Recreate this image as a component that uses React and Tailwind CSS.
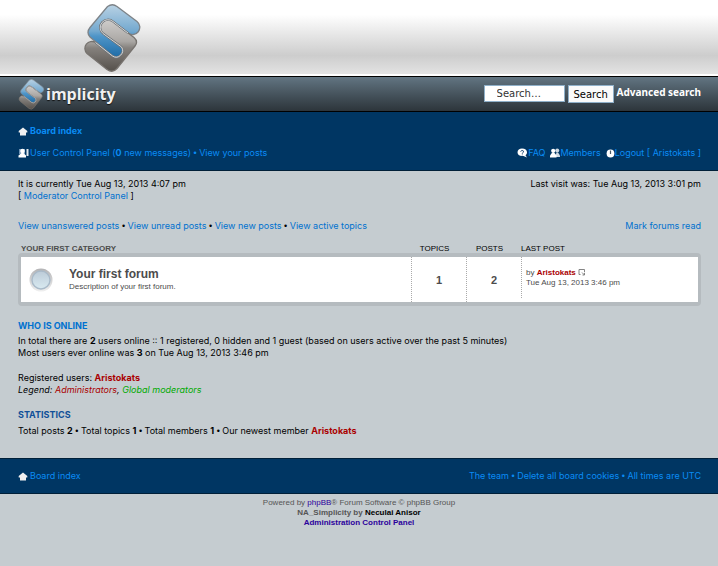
const navLink = "text-[#0a8cf5] hover:underline";
const link = "text-[#0071cf] hover:underline";

function Dot() {
  return <span className="font-['Liberation_Sans',Arial,sans-serif]"> • </span>;
}

function Logo({ id, className }) {
  return (
    <svg viewBox="0 0 57 69" className={className} aria-hidden="true">
      <defs>
        <linearGradient id={`${id}-blue`} x1="0" y1="0" x2="0" y2="1">
          <stop offset="0" stopColor="#b9d2e4" />
          <stop offset="0.5" stopColor="#74a9cf" />
          <stop offset="0.6" stopColor="#4f95c8" />
          <stop offset="1" stopColor="#1f6ca6" />
        </linearGradient>
        <linearGradient id={`${id}-gray`} x1="0" y1="0" x2="0" y2="1">
          <stop offset="0" stopColor="#cfcdcb" />
          <stop offset="0.42" stopColor="#aaa7a4" />
          <stop offset="0.55" stopColor="#85817d" />
          <stop offset="1" stopColor="#55504b" />
        </linearGradient>
      </defs>
      <path
        d="M23.500 2.500Q28.500 -1 33 2.500L53 17.500A7.300 7.300 0 0 1 44 29L29 17.500A7.800 7.800 0 0 0 19 29.500L37.500 43A6.500 6.500 0 0 1 28.500 52L6 33Q2 28.500 6 23.500Z"
        fill={`url(#${id}-blue)`}
        stroke="#7d8388"
        strokeWidth="1.300"
      />
      <path
        d="M29 17.500L50 33.500Q54.500 37.500 51 42L33 64.500Q28.500 69.500 23 65.500L3 49.500A7 7 0 0 1 11.500 38.500L28.500 52A6.500 6.500 0 0 0 37.500 43L19 29.500A7.800 7.800 0 0 1 29 17.500Z"
        fill={`url(#${id}-gray)`}
        stroke="#77736f"
        strokeWidth="1.300"
      />
      <path d="M44 29L29 17.500A7.800 7.800 0 0 0 19 29.500L37.500 43A6.500 6.500 0 0 1 28.500 52L11.500 38.500" fill="none" stroke="#707579" strokeWidth="2.200" />
      <path d="M44 29L29 17.500A7.800 7.800 0 0 0 19 29.500L37.500 43A6.500 6.500 0 0 1 28.500 52L11.500 38.500" fill="none" stroke="#d3d6d8" strokeWidth="1" />
    </svg>
  );
}

function HomeIcon() {
  return (
    <svg viewBox="0 0 10 9" className="h-[9px] w-[10px] shrink-0" aria-hidden="true">
      <path d="M5 0.500L9.300 4V5.500H8V8.500H2V5.500H0.700V4Z" fill="#f0f0f0" />
    </svg>
  );
}

function UserIcon() {
  return (
    <svg viewBox="0 0 11 10" className="h-[10px] w-[11px] shrink-0" aria-hidden="true">
      <path d="M1 1H7V6H1Z" fill="#6f93b5" />
      <circle cx="4.500" cy="3" r="2.300" fill="#fff" />
      <path d="M0.500 9.500V7.500L3.500 5H5.500L8 7.500V9.500Z" fill="#fff" />
      <path d="M8.500 1H10.500V8H8.500Z" fill="#dfe7ee" />
    </svg>
  );
}

function FaqIcon() {
  return (
    <svg viewBox="0 0 11 10" className="h-[10px] w-[11px] shrink-0" aria-hidden="true">
      <path d="M5 0.500C8 0.500 10 2 10 4.300C10 5.500 9.500 6.500 8.500 7.200L10 9.500L6.500 8C2.500 8.500 0.500 6.500 0.500 4.300C0.500 2 2.500 0.500 5 0.500Z" fill="#fff" />
      <path d="M3.500 3.500Q5 1.500 6.500 3Q7 4.500 5.300 5V5.700M5.300 6.500V7.300" fill="none" stroke="#33597f" strokeWidth="1" />
    </svg>
  );
}

function MembersIcon() {
  return (
    <svg viewBox="0 0 10 10" className="h-[10px] w-[10px] shrink-0" aria-hidden="true">
      <circle cx="7.200" cy="2.600" r="2" fill="#cfdae4" />
      <path d="M5.500 8L6.500 4.500H8L10 7.500V9H6Z" fill="#cfdae4" />
      <circle cx="3.200" cy="2.800" r="2.100" fill="#fff" />
      <path d="M0 9.500V7.500L2.200 4.500H4.200L6.500 7.500V9.500Z" fill="#fff" />
    </svg>
  );
}

function LogoutIcon() {
  return (
    <svg viewBox="0 0 9 9" className="h-[9px] w-[9px] shrink-0" aria-hidden="true">
      <circle cx="4.500" cy="4.500" r="3.900" fill="#fff" />
      <path d="M4.500 1.500V5" stroke="#4a5864" strokeWidth="1.200" />
    </svg>
  );
}

function LatestPostIcon() {
  return (
    <svg viewBox="0 0 8 7" className="inline-block h-[7px] w-[8px]" aria-hidden="true">
      <path d="M2.500 5.500H1V0.500H6.500V3M4 3.500L6.500 6M6.500 3.800V6H4.500" fill="none" stroke="#777" strokeWidth="0.900" />
    </svg>
  );
}

function ForumIcon() {
  return (
    <svg viewBox="0 0 24 24" className="h-6 w-6" aria-hidden="true">
      <defs>
        <linearGradient id="orb" x1="0" y1="0" x2="0" y2="1">
          <stop offset="0" stopColor="#bccbd8" />
          <stop offset="1" stopColor="#d9eaf1" />
        </linearGradient>
        <linearGradient id="orb-ring" x1="0" y1="0" x2="0" y2="1">
          <stop offset="0" stopColor="#b3b3b5" />
          <stop offset="1" stopColor="#f0f0f0" />
        </linearGradient>
      </defs>
      <circle cx="12" cy="12" r="11.500" fill="url(#orb-ring)" />
      <circle cx="12" cy="12" r="9" fill="url(#orb)" stroke="#a9bac9" strokeWidth="1.400" />
    </svg>
  );
}

export default function App() {
  return (
    <div className="min-h-screen bg-[#c5ccd0] font-[Inter,Arial,sans-serif] text-[9px] leading-3 text-black">
      <header>
        <div className="h-[76px] border-b-2 border-white bg-linear-to-b from-white from-20% via-[#cdcdcd] via-75% to-[#e3e3e3] px-[84px] pt-1">
          <Logo id="large" className="h-[69px] w-[57px]" />
        </div>
        <div className="flex h-9 items-center border-y border-black bg-linear-to-b from-[#627582] to-[#2d353b] pr-[17px] pl-[18px]">
          <a href="#" className="flex items-center text-white">
            <Logo id="small" className="h-[31px] w-[27px]" />
            <span className="pl-px font-['Open_Sans',sans-serif] text-[16px] leading-6 font-bold text-[#f0f0f0] [text-shadow:0_1px_1px_#111]">implicity</span>
          </a>
          <form className="ml-auto flex items-start gap-[3px] font-['DejaVu_Sans',Verdana,sans-serif] text-[10px]" onSubmit={(e) => e.preventDefault()}>
            <input aria-label="Search" defaultValue="Search…" className="h-[17px] w-[81px] border border-[#8fb0c9] bg-white pl-3 text-[#333]" />
            <button className="h-[18px] w-[46px] border border-[#8fb0c9] bg-[#fafafa] pt-0.5">Search</button>
            <a href="#" className="pt-px font-['Noto_Sans',sans-serif] font-bold text-white">Advanced search</a>
          </form>
        </div>
      </header>

      <nav className="h-[59px] border-b border-[#001f38] bg-[#003663] pt-[13px] pr-[17px] pl-[18px] text-[#0a8cf5]">
        <div className="flex items-center gap-0.5 font-bold">
          <HomeIcon />
          <a href="#" className={navLink}>Board index</a>
        </div>
        <div className="mt-[10px] flex items-center justify-between">
          <div className="flex items-center gap-px">
            <UserIcon />
            <span>
              <a href="#" className={navLink}>User Control Panel (<b>0</b> new messages)</a><Dot /><a href="#" className={navLink}>View your posts</a>
            </span>
          </div>
          <div className="flex gap-[5px]">
            <a href="#" className="flex items-center"><FaqIcon />FAQ</a>
            <a href="#" className="flex items-center"><MembersIcon />Members</a>
            <a href="#" className="flex items-center"><LogoutIcon />Logout [ Aristokats ]</a>
          </div>
        </div>
      </nav>

      <main className="pt-[7px] pr-[17px] pb-[21px] pl-[18px]">
        <div className="flex justify-between">
          <p>It is currently Tue Aug 13, 2013 4:07 pm<br />[ <a href="#" className={link}>Moderator Control Panel</a> ]</p>
          <p>Last visit was: Tue Aug 13, 2013 3:01 pm</p>
        </div>
        <div className="mt-[18px] flex justify-between">
          <p>
            <a href="#" className={link}>View unanswered posts</a><Dot /><a href="#" className={link}>View unread posts</a><Dot /><a href="#" className={link}>View new posts</a><Dot /><a href="#" className={link}>View active topics</a>
          </p>
          <a href="#" className={link}>Mark forums read</a>
        </div>

        <table className="mt-[13px] w-full table-fixed border-separate border-spacing-0 font-['Liberation_Sans',Arial,sans-serif]">
          <colgroup>
            <col />
            <col className="w-[55px]" />
            <col className="w-[55px]" />
            <col className="w-[180px]" />
          </colgroup>
          <thead className="text-[8px] leading-[8px]">
            <tr>
              <th className="pl-[3px] text-left text-[#4c4c4c]">YOUR FIRST CATEGORY</th>
              <th className="pr-2 font-normal">TOPICS</th>
              <th className="pr-2 font-normal">POSTS</th>
              <th className="text-left font-normal">LAST POST</th>
            </tr>
          </thead>
          <tbody className="text-[#4c4c4c]">
            <tr>
              <td className="rounded-l-sm border-y-4 border-l-[3px] border-[#b5bbbf] bg-white pl-2">
                <div className="flex items-center gap-4">
                  <ForumIcon />
                  <div className="leading-[10px]">
                    <a href="#" className="block text-[12px] leading-[14px] font-bold">Your first forum</a>
                    <span className="text-[8px]">Description of your first forum.</span>
                  </div>
                </div>
              </td>
              <td className="border-y-4 border-[#b5bbbf] bg-white p-0"><div className="flex h-[45px] items-center justify-center border-l border-dotted border-[#aaa] text-[11px] font-bold">1</div></td>
              <td className="border-y-4 border-[#b5bbbf] bg-white p-0"><div className="flex h-[45px] items-center justify-center border-l border-dotted border-[#aaa] text-[11px] font-bold">2</div></td>
              <td className="rounded-r-sm border-y-4 border-r-[3px] border-[#b5bbbf] bg-white p-0 align-top">
                <div className="flex h-[41px] flex-col justify-center border-l border-dotted border-[#aaa] pl-1 text-[8px] leading-[10px]">
                  <p>by <a href="#" className="font-bold text-[#aa0000]">Aristokats</a> <LatestPostIcon /></p>
                  <p>Tue Aug 13, 2013 3:46 pm</p>
                </div>
              </td>
            </tr>
          </tbody>
        </table>

        <h2 className="mt-[14px] font-bold"><a href="#" className={link}>WHO IS ONLINE</a></h2>
        <p className="mt-[3px]">
          In total there are <b>2</b> users online :: 1 registered, 0 hidden and 1 guest (based on users active over the past 5 minutes)<br />
          Most users ever online was <b>3</b> on Tue Aug 13, 2013 3:46 pm
        </p>
        <p className="mt-[13px]">
          Registered users: <a href="#" className="font-bold text-[#aa0000]">Aristokats</a><br />
          <i>Legend: <a href="#" className="text-[#aa0000]">Administrators</a>, <a href="#" className="text-[#00aa00]">Global moderators</a></i>
        </p>
        <h2 className="mt-[13px] font-bold text-[#115098]">STATISTICS</h2>
        <p className="mt-1">
          Total posts <b>2</b><Dot />Total topics <b>1</b><Dot />Total members <b>1</b><Dot />Our newest member <a href="#" className="font-bold text-[#aa0000]">Aristokats</a>
        </p>
      </main>

      <footer>
        <div className="flex h-9 items-center justify-between border-y border-[#001f38] bg-[#003663] pr-[17px] pl-[18px] text-[#0a8cf5]">
          <a href="#" className="flex items-center gap-0.5"><HomeIcon />Board index</a>
          <p><a href="#" className={navLink}>The team</a><Dot /><a href="#" className={navLink}>Delete all board cookies</a><Dot />All times are UTC</p>
        </div>
        <div className="mt-1 text-center font-['Liberation_Sans',Arial,sans-serif] text-[8px] leading-[10px] text-[#555]">
          <p>Powered by <a href="#" className="text-[#2b009c]">phpBB</a>® Forum Software © phpBB Group</p>
          <p className="font-bold">NA_Simplicity by <a href="#" className="text-black">Neculai Anisor</a></p>
          <p><a href="#" className="font-bold text-[#2b009c]">Administration Control Panel</a></p>
        </div>
      </footer>
    </div>
  );
}
